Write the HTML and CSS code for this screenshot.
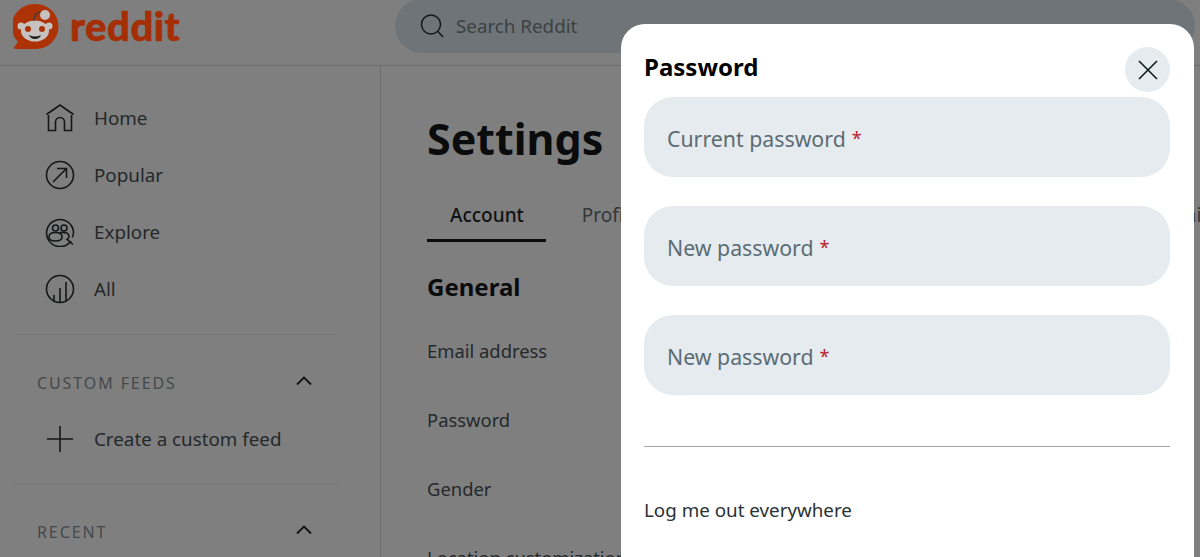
FILE: index.html
```html
<!DOCTYPE html>
<html lang="en">
<head>
  <meta charset="UTF-8" />
  <title>Settings - Reddit</title>
  <link rel="stylesheet" href="styles.css">
</head>
<body>

  <header class="topbar">
    <a class="brand">
      <svg class="brand-mark" viewBox="0 0 46 46" width="46" height="46">
        <path d="M23 1a22.500 22.500 0 0 1 0 45H3q-3 0-1.400-2.400L5 39A22.500 22.500 0 0 1 23 1z" fill="#ad3206"/>
        <ellipse cx="22" cy="28" rx="14" ry="10.500" fill="#c6c2bf"/>
        <circle cx="8" cy="23" r="3.500" fill="#c6c2bf"/>
        <circle cx="36" cy="23" r="3.500" fill="#c6c2bf"/>
        <circle cx="32" cy="12" r="5" fill="#c6c2bf"/>
        <path d="M21 18q0-8 6-9" fill="none" stroke="#4a3a34" stroke-width="1.500"/>
        <circle cx="15" cy="26" r="3" fill="#ad3206"/>
        <circle cx="29" cy="26" r="3" fill="#ad3206"/>
        <path d="M16 32q6 3 12 0q-1.500 4-6 4t-6-4z" fill="#1c1c1c"/>
      </svg>
      <span class="brand-name">reddit</span>
    </a>
    <div class="search">
      <svg viewBox="0 0 24 24" width="24" height="24" fill="none" stroke="#151719" stroke-width="1.500">
        <circle cx="11" cy="10.500" r="9.500"/>
        <path d="M18 17.500l5 5.500"/>
      </svg>
      <span>Search Reddit</span>
    </div>
  </header>

  <div class="page">
    <nav class="sidebar">
      <ul class="nav-list">
        <li class="nav-item">
          <svg viewBox="0 0 30 30" width="30" height="30" class="nav-icon">
            <path d="M1.500 11.500L15 2l13.500 9.500M3.500 12v15.500h7V19a4.500 4.500 0 0 1 9 0v8.500h7V12"/>
          </svg>
          Home
        </li>
        <li class="nav-item">
          <svg viewBox="0 0 30 30" width="30" height="30" class="nav-icon">
            <circle cx="15" cy="15" r="13.500"/>
            <path d="M8 22L21 9M12 8.500h9.500V18"/>
          </svg>
          Popular
        </li>
        <li class="nav-item">
          <svg viewBox="0 0 30 30" width="30" height="30" class="nav-icon">
            <path d="M26 24A13.500 13.500 0 1 1 28.500 15q0 3-1.200 5.500"/>
            <circle cx="10.500" cy="11" r="3"/>
            <circle cx="19" cy="11" r="3"/>
            <path d="M4 20q0-4.500 6.500-4.500q6.500 0 6.500 4.500q0 4-6.500 4q-6.500 0-6.500-4z"/>
            <path d="M15 15.500q9 -1 9 4q0 2-2 3l6 5"/>
          </svg>
          Explore
        </li>
        <li class="nav-item">
          <svg viewBox="0 0 30 30" width="30" height="30" class="nav-icon">
            <circle cx="15" cy="15" r="13.500"/>
            <path d="M9 28v-7M15 28.500V14M21 27.500V8"/>
          </svg>
          All
        </li>
      </ul>

      <section class="nav-section">
        <div class="section-head">
          <span>CUSTOM FEEDS</span>
          <svg viewBox="0 0 16 10" width="16" height="10" class="chevron"><path d="M1 8.500L8 1.500l7 7"/></svg>
        </div>
        <div class="nav-item">
          <svg viewBox="0 0 30 30" width="30" height="30" class="nav-icon">
            <path d="M15 2v26M2 15h26"/>
          </svg>
          Create a custom feed
        </div>
      </section>

      <section class="nav-section">
        <div class="section-head">
          <span>RECENT</span>
          <svg viewBox="0 0 16 10" width="16" height="10" class="chevron"><path d="M1 8.500L8 1.500l7 7"/></svg>
        </div>
      </section>
    </nav>

    <main class="content">
      <h1>Settings</h1>
      <div class="tabs">
        <span class="tab active">Account</span>
        <span class="tab">Profile</span>
        <span class="tab">Privacy</span>
        <span class="tab">Preferences</span>
        <span class="tab">Notifications</span>
        <span class="tab">Email</span>
      </div>
      <h2>General</h2>
      <div class="setting">Email address</div>
      <div class="setting">Password</div>
      <div class="setting">Gender</div>
      <div class="setting">Location customization</div>
    </main>
  </div>

  <div class="modal">
    <div class="modal-head">
      <h3>Password</h3>
      <button class="close">
        <svg viewBox="0 0 20 20" width="20" height="20" fill="none" stroke="#0f1a1c" stroke-width="1.600">
          <path d="M1 1l18 18M19 1L1 19"/>
        </svg>
      </button>
    </div>
    <div class="field">Current password <span class="req">*</span></div>
    <div class="field">New password <span class="req">*</span></div>
    <div class="field">New password <span class="req">*</span></div>
    <hr class="modal-rule">
    <div class="logout">Log me out everywhere</div>
  </div>

</body>
</html>
```

FILE: styles.css
```css
* {
  box-sizing: border-box;
}
html, body {
  height: 100%;
}
body {
  margin: 0;
  background: #7f7f7f;
  color: #24292c;
  font-family: "Noto Sans", Arial, sans-serif;
  overflow: hidden;
}
.topbar {
  display: flex;
  align-items: center;
  height: 66px;
  border-bottom: 1px solid #6c6c6c;
  padding: 0 0 13px 13px;
}
.brand {
  display: flex;
  align-items: center;
  gap: 11px;
  width: 382px;
}
.brand-name {
  font-family: Lato, sans-serif;
  font-weight: 900;
  font-size: 40px;
  line-height: 46px;
  color: #a52e04;
  letter-spacing: 0.5px;
  -webkit-text-stroke: 0.6px #a52e04;
}
.search {
  flex: 1;
  display: flex;
  align-items: center;
  gap: 12px;
  height: 54px;
  margin-right: 5px;
  padding-left: 25px;
  border-radius: 27px;
  background: #6f7478;
  font-size: 18.800px;
  color: #3c4144;
}
.page {
  display: flex;
  height: 491px;
}
.sidebar {
  width: 381px;
  flex-shrink: 0;
  padding: 23px 40px 0 14px;
  border-right: 1px solid #6c6c6c;
}
.nav-list {
  list-style: none;
  margin: 0;
  padding: 0 0 17px;
}
.nav-item {
  display: flex;
  align-items: center;
  gap: 19px;
  height: 57px;
  padding-left: 31px;
  font-size: 18.800px;
  color: #24292c;
}
.nav-icon {
  flex-shrink: 0;
  fill: none;
  stroke: #141617;
  stroke-width: 1.600;
}
.nav-section {
  border-top: 1px solid #767676;
}
.section-head {
  display: flex;
  justify-content: space-between;
  align-items: center;
  height: 48px;
  margin-top: 24px;
  padding: 0 28px 0 23px;
  font-size: 16px;
  letter-spacing: 1.900px;
  color: #45494b;
}
.chevron {
  margin-bottom: 5px;
  fill: none;
  stroke: #101213;
  stroke-width: 1.800;
}
.section-head + .nav-item {
  margin-top: 3px;
  margin-bottom: 16px;
}
.content {
  flex: 1;
  overflow: hidden;
  padding: 43px 0 0 46px;
}
h1 {
  margin: 0 0 22px;
  font-size: 43px;
  line-height: 60px;
  font-weight: 700;
  color: #0a0b0c;
}
.tabs {
  display: flex;
  gap: 13px;
  height: 51px;
  white-space: nowrap;
}
.tab {
  padding: 9px 23px 0;
  font-size: 19px;
  line-height: 30px;
  color: #33383b;
}
.tab.active {
  padding-right: 22px;
  border-bottom: 3px solid #0a0b0c;
  color: #101213;
  font-weight: 500;
}
h2 {
  margin: 25px 0 29px;
  font-size: 24px;
  line-height: 40px;
  font-weight: 700;
  color: #0a0b0c;
}
.setting {
  height: 69px;
  font-size: 18.400px;
  line-height: 30px;
  color: #24292c;
}
.modal {
  position: absolute;
  left: 621px;
  top: 24px;
  width: 573px;
  height: 533px;
  padding: 0 24px 0 23px;
  background: #fff;
  border-radius: 24px 24px 0 0;
}
.modal-head {
  display: flex;
  justify-content: space-between;
  height: 73px;
  padding-top: 23px;
}
.modal-head h3 {
  margin: 0;
  font-size: 24px;
  line-height: 40px;
  font-weight: 700;
  color: #000;
}
.close {
  display: flex;
  align-items: center;
  justify-content: center;
  width: 45px;
  height: 45px;
  padding: 0;
  border: none;
  border-radius: 50%;
  background: #e5ebee;
}
.field {
  display: flex;
  align-items: center;
  gap: 6px;
  height: 80px;
  margin-bottom: 29px;
  padding: 2px 0 0 23px;
  border-radius: 29px;
  background: #e5ebee;
  font-size: 21.300px;
  color: #5c6c74;
}
.req {
  color: #b8202c;
  font-size: 18px;
}
.modal-rule {
  height: 1px;
  margin: 51px 0 0;
  border: none;
  background: #a8a8a8;
}
.logout {
  margin-top: 48px;
  font-size: 18.800px;
  line-height: 30px;
  color: #2a3236;
}
```
